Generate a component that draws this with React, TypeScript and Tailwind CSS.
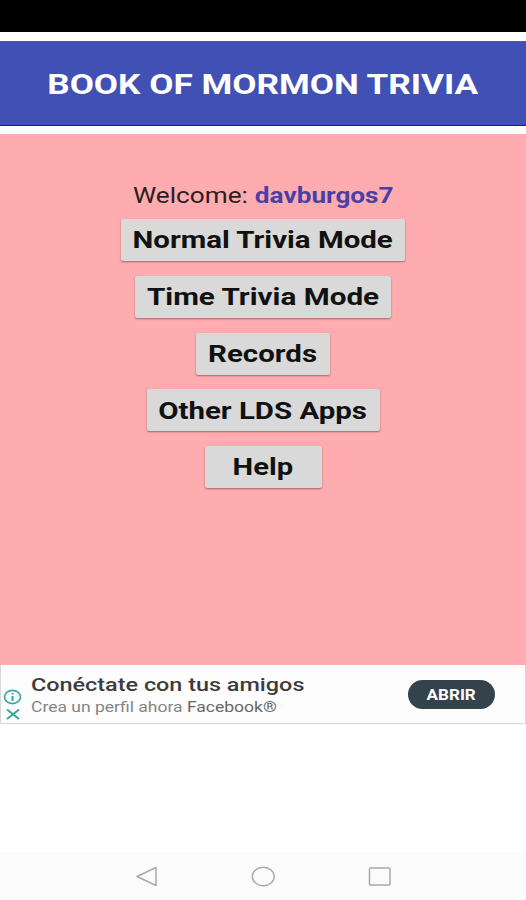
import { clsx } from "clsx";

const menu = [
  { label: "Normal Trivia Mode", box: "w-[284px]", stretch: "scale-x-[1.28]" },
  { label: "Time Trivia Mode", box: "w-[256px]", stretch: "scale-x-[1.29]" },
  { label: "Records", box: "w-[134px]", stretch: "scale-x-[1.28]" },
  { label: "Other LDS Apps", box: "w-[233px]", stretch: "scale-x-[1.28]" },
  { label: "Help", box: "w-[117px]", stretch: "scale-x-[1.27]" },
];

const MenuButton = ({ label, box, stretch }: (typeof menu)[number]) => (
  <button
    className={clsx(
      "flex h-[42px] items-center justify-center rounded-[2px] bg-[#d8d9d8] pt-[3px] text-[23px] font-bold text-[#111] shadow-[0_1px_2px_rgba(90,40,40,0.55)]",
      box
    )}
  >
    <span className={clsx("whitespace-nowrap", stretch)}>{label}</span>
  </button>
);

const AdBanner = () => (
  <div className="flex h-[59px] items-center border border-t-0 border-[#d8d8d8] bg-[#fdfdfd]">
    <div className="flex w-[30px] flex-col gap-[3px] pt-[20px] pl-[2px]">
      <svg width="19" height="16" viewBox="0 0 19 16" fill="none" stroke="#35a79c" strokeWidth="1.6">
        <ellipse cx="9.5" cy="8" rx="8" ry="6.6" />
        <path d="M9.5 7v5M9.5 4v1.6" strokeWidth="2" />
      </svg>
      <svg width="19" height="12" viewBox="0 0 19 12" fill="none" stroke="#35a79c" strokeWidth="2">
        <path d="M4 1.500l12 9.500M16 1.500l-12 9.500" />
      </svg>
    </div>
    <div className="flex flex-1 flex-col items-start pt-[3px]">
      <span className="origin-left scale-x-[1.3] text-[18px] leading-[23px] font-medium whitespace-nowrap text-[#3c3c3c]">
        Conéctate con tus amigos
      </span>
      <span className="origin-left scale-x-[1.25] text-[14px] leading-[22px] whitespace-nowrap text-[#858585]">
        Crea un perfil ahora <span className="text-[#666]">Facebook®</span>
      </span>
    </div>
    <button className="mr-[30px] flex h-[29px] w-[87px] items-center justify-center rounded-full bg-[#34434b] pt-[2px] text-[14px] font-bold text-white">
      <span className="scale-x-[1.22]">ABRIR</span>
    </button>
  </div>
);

const NavBar = () => (
  <div className="flex h-[48px] items-center justify-center gap-[93px] bg-[#fbfbfb]">
    <svg width="24" height="22" viewBox="0 0 24 22" fill="none" stroke="#a9a9a9" strokeWidth="1.5">
      <path d="M3 11.500L22 2.500v18z" strokeLinejoin="round" />
    </svg>
    <svg width="24" height="22" viewBox="0 0 24 22" fill="none" stroke="#a9a9a9" strokeWidth="1.5">
      <ellipse cx="12.300" cy="11.500" rx="11" ry="9.200" />
    </svg>
    <svg width="24" height="22" viewBox="0 0 24 22" fill="none" stroke="#a9a9a9" strokeWidth="1.5">
      <rect x="1.500" y="3" width="20.500" height="17" rx="1" />
    </svg>
  </div>
);

export default function App() {
  return (
    <div className="flex h-[900px] w-[526px] flex-col overflow-hidden bg-white font-['Roboto','Liberation_Sans',sans-serif]">
      <div className="h-[32px] bg-black" />
      <header className="mt-[9px] flex h-[85px] items-center justify-center border-t border-b border-t-[#50599c] border-b-[#17207f] bg-[#4050b5] pt-[2px]">
        <h1 className="scale-x-[1.255] text-[28px] font-bold whitespace-nowrap text-white">
          BOOK OF MORMON TRIVIA
        </h1>
      </header>
      <main className="mt-[8px] flex h-[531px] flex-col items-center bg-[#ffacb0] pt-[46px]">
        <div className="flex h-[30px] w-[261px] items-center justify-between text-[22px]">
          <span className="origin-left scale-x-[1.19] text-[#2b2020]">Welcome:</span>
          <span className="origin-right scale-x-[1.19] font-bold text-[#4a3ea8]">davburgos7</span>
        </div>
        <div className="mt-[9px] flex flex-col items-center gap-[14.75px]">
          {menu.map((item) => (
            <MenuButton key={item.label} {...item} />
          ))}
        </div>
      </main>
      <AdBanner />
      <div className="flex-1" />
      <NavBar />
    </div>
  );
}
